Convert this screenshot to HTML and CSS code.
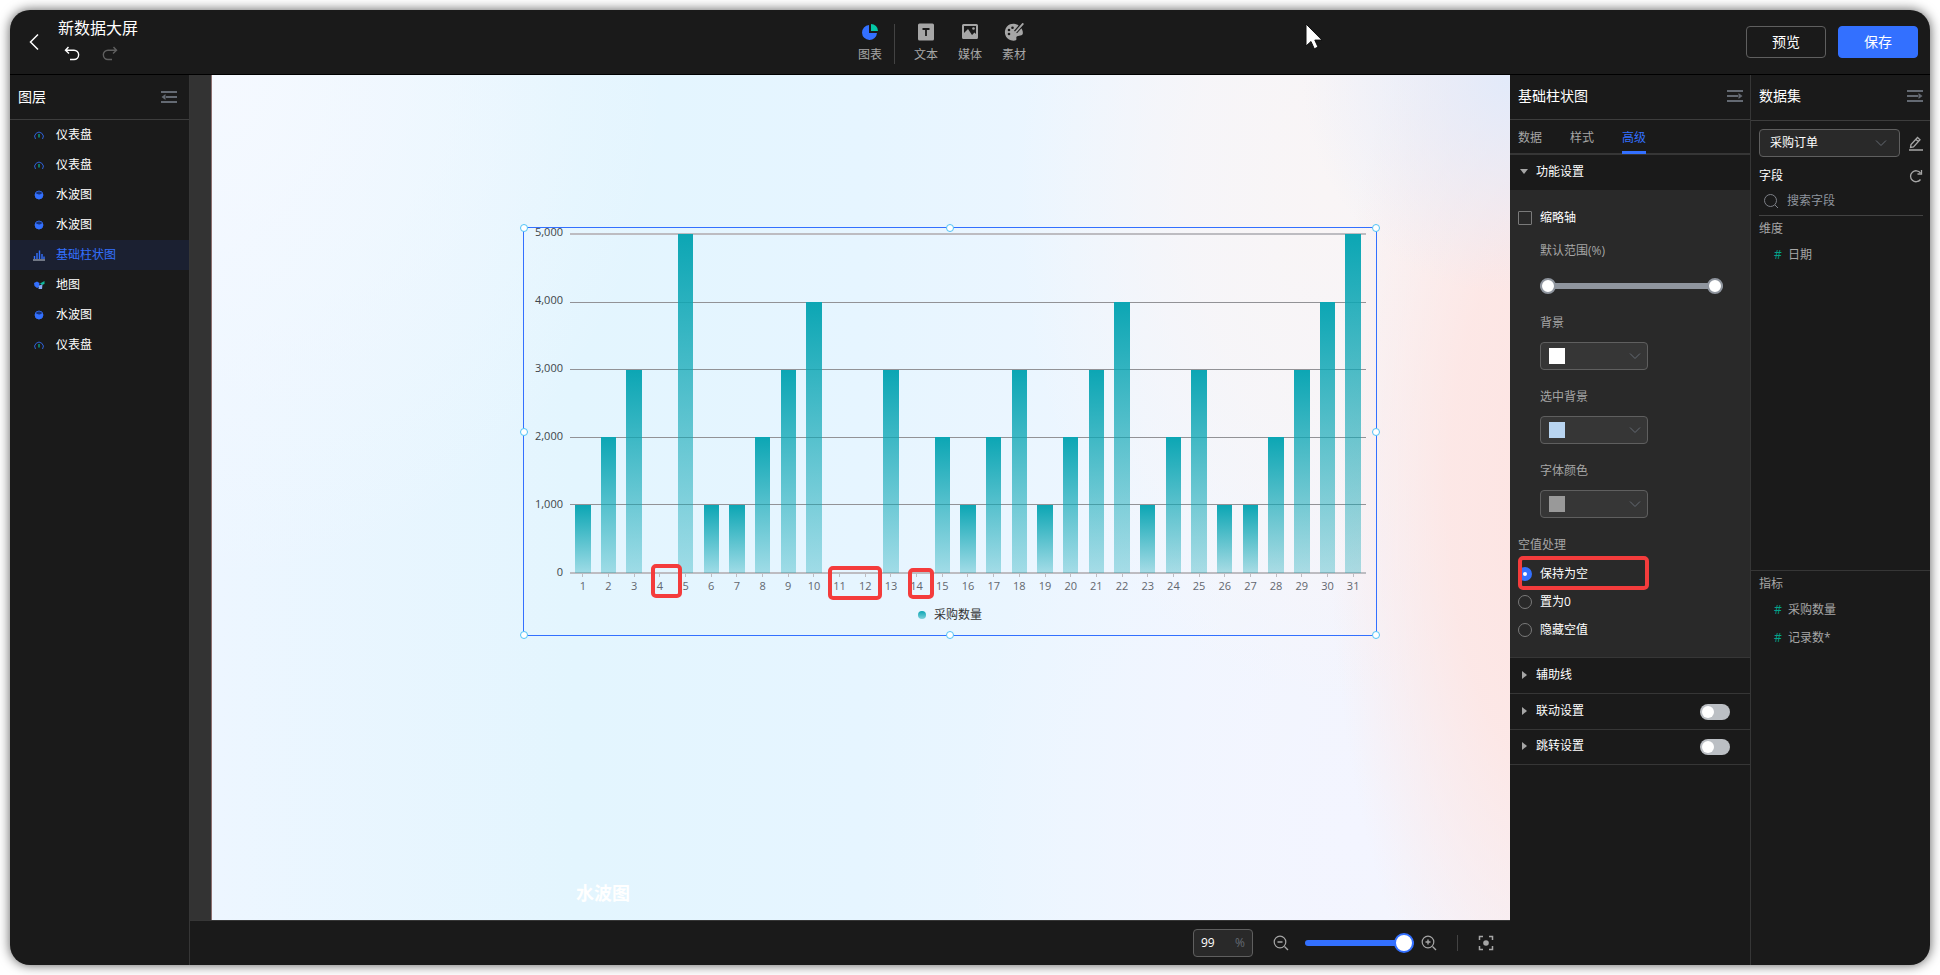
FILE: index.html
```html
<!DOCTYPE html>
<html lang="zh-CN">
<head>
<meta charset="utf-8">
<title>新数据大屏</title>
<link rel="stylesheet" href="styles.css">
</head>
<body>
<svg class="defs" aria-hidden="true">
  <defs>
    <symbol id="gauge" viewBox="0 0 12 12"><path d="M2.500 10A4.300 4.300 0 1 1 9.500 10" fill="none" stroke="#2f62d9"/><path d="M6 5v3.500" stroke="#0c8f7a" stroke-width="1.600"/></symbol>
    <symbol id="water" viewBox="0 0 12 12"><circle cx="6" cy="6" r="4" fill="#16337d" stroke="#2f62d9"/><path d="M2 4.500C3.500 3.500 4.500 6 6.500 5.500S9 4 10 5A4 4 0 0 1 2 7z" fill="#3370ff"/></symbol>
    <symbol id="chevron" viewBox="0 0 12 8"><path d="M1 1.500 6 6.500 11 1.500" fill="none" stroke="currentColor"/></symbol>
    <symbol id="fold" viewBox="0 0 16 14"><path d="M0 2h16M0 12h16M0 7h11" stroke="currentColor" stroke-width="2"/><path d="M11.500 4v6L15.500 7z" fill="currentColor"/></symbol>
  </defs>
</svg>
<div class="app">
  <header class="topbar">
    <div class="topbar-left">
      <button class="icon-btn" aria-label="返回"><svg width="12" height="18" viewBox="0 0 12 18"><path d="M10 1.500 2.500 9 10 16.500" fill="none" stroke="#fff" stroke-width="1.500"/></svg></button>
      <div class="doc">
        <h1>新数据大屏</h1>
        <div class="history">
          <button class="icon-btn" aria-label="撤销"><svg width="16" height="16" viewBox="0 0 16 16"><path d="M4.500 1 1.500 4.200 5 7.500M2 4.200h8a4.600 4.600 0 0 1 0 9.300H6" fill="none" stroke="#fff" stroke-width="1.400"/></svg></button>
          <button class="icon-btn" aria-label="重做"><svg width="16" height="16" viewBox="0 0 16 16"><path d="M11.500 1 14.500 4.200 11 7.500M14 4.200H6a4.600 4.600 0 0 0 0 9.300h4" fill="none" stroke="#5f5f5f" stroke-width="1.400"/></svg></button>
        </div>
      </div>
    </div>
    <nav class="tools">
      <button class="tool"><svg width="18" height="18" viewBox="0 0 18 18"><path d="M8 2a7.500 7.500 0 1 0 8 8H8z" fill="#3370ff"/><path d="M10 1a7 7 0 0 1 7 7h-7z" fill="#04c8a6"/></svg>图表</button>
      <span class="tools-sep"></span>
      <button class="tool"><svg width="18" height="18" viewBox="0 0 18 18"><rect x="1" y="0.500" width="16" height="17" rx="1.500" fill="#a6a6a6"/><path d="M5.500 6h7M9 6v7" stroke="#1a1a1a" stroke-width="1.800"/></svg>文本</button>
      <button class="tool"><svg width="18" height="18" viewBox="0 0 18 18"><path fill-rule="evenodd" d="M2.500 1h13A1.500 1.500 0 0 1 17 2.500v12a1.500 1.500 0 0 1-1.500 1.500h-13A1.500 1.500 0 0 1 1 14.500v-12A1.500 1.500 0 0 1 2.500 1zM3 3v7l4-4 4 6 2.500-2.500L15 11V3z" fill="#a6a6a6"/><circle cx="12.500" cy="5.500" r="1.300" fill="#a6a6a6"/></svg>媒体</button>
      <button class="tool"><svg width="20" height="18" viewBox="0 0 20 18"><path d="M14 2A8.500 8.500 0 1 0 11 17.500c2 0 1.300-2 1.300-3 0-2.500 5.700-1 6.400-3.500.5-2-.2-4-1.200-5.500" fill="#a6a6a6"/><path d="M19 .5 11.500 9" stroke="#1a1a1a" stroke-width="4"/><path d="M19.300.3 9 12l-.800 1.200" stroke="#a6a6a6" stroke-width="1.800"/><g fill="#1a1a1a"><circle cx="8.500" cy="4.700" r="1.300"/><circle cx="5" cy="7" r="1.300"/><circle cx="5" cy="11" r="1.300"/></g></svg>素材</button>
    </nav>
    <div class="topbar-actions">
      <button class="btn">预览</button>
      <button class="btn btn-primary">保存</button>
    </div>
    <svg class="pointer" width="20" height="28" viewBox="0 0 20 28" aria-hidden="true"><path d="M1 1v22l5-4.500 3.300 7.300 3.700-1.700-3.200-7H17z" fill="#fff" stroke="#111"/></svg>
  </header>

  <div class="workspace">
    <aside class="layers">
      <div class="panel-head"><h2>图层</h2><button class="icon-btn muted" aria-label="收起"><svg class="flip" width="16" height="14"><use href="#fold"/></svg></button></div>
      <ul class="layer-list">
        <li><svg class="li-icon"><use href="#gauge"/></svg>仪表盘</li>
        <li><svg class="li-icon"><use href="#gauge"/></svg>仪表盘</li>
        <li><svg class="li-icon"><use href="#water"/></svg>水波图</li>
        <li><svg class="li-icon"><use href="#water"/></svg>水波图</li>
        <li class="active"><svg class="li-icon" viewBox="0 0 12 12"><path d="M1.500 10V7M4 10V4M6.500 10V1.500M9 10V5M11 10V7.500" stroke="#3370ff" stroke-width="1.400"/><path d="M0 11h12" stroke="#c8cdd8"/></svg>基础柱状图</li>
        <li><svg class="li-icon" viewBox="0 0 12 12"><path d="M1 4l3-1.500L6.500 4 6 8 4 9 1.500 7z" fill="#3370ff"/><path d="M7 4.500 11.500 2v3L9 6z" fill="#0fb89c"/><path d="M6 6.500 9.500 5.500 9 10H5.500z" fill="#85a9f5"/></svg>地图</li>
        <li><svg class="li-icon"><use href="#water"/></svg>水波图</li>
        <li><svg class="li-icon"><use href="#gauge"/></svg>仪表盘</li>
      </ul>
    </aside>

    <main class="stage">
      <div class="canvas">
        <section class="chart">
          <div class="plot-row">
            <div class="y-axis"><span>5,000</span><span>4,000</span><span>3,000</span><span>2,000</span><span>1,000</span><span>0</span></div>
            <div class="plot">
              <div class="grid-lines"><i></i><i></i><i></i><i></i><i></i><i></i></div>
              <div class="bars">
                <b style="height:20%"></b><b style="height:40%"></b><b style="height:60%"></b><b style="height:0%"></b><b style="height:100%"></b><b style="height:20%"></b><b style="height:20%"></b><b style="height:40%"></b><b style="height:60%"></b><b style="height:80%"></b><b style="height:0%"></b><b style="height:0%"></b><b style="height:60%"></b><b style="height:0%"></b><b style="height:40%"></b><b style="height:20%"></b><b style="height:40%"></b><b style="height:60%"></b><b style="height:20%"></b><b style="height:40%"></b><b style="height:60%"></b><b style="height:80%"></b><b style="height:20%"></b><b style="height:40%"></b><b style="height:60%"></b><b style="height:20%"></b><b style="height:20%"></b><b style="height:40%"></b><b style="height:60%"></b><b style="height:80%"></b><b style="height:100%"></b>
              </div>
            </div>
          </div>
          <div class="x-axis"><span>1</span><span>2</span><span>3</span><span>4</span><span>5</span><span>6</span><span>7</span><span>8</span><span>9</span><span>10</span><span>11</span><span>12</span><span>13</span><span>14</span><span>15</span><span>16</span><span>17</span><span>18</span><span>19</span><span>20</span><span>21</span><span>22</span><span>23</span><span>24</span><span>25</span><span>26</span><span>27</span><span>28</span><span>29</span><span>30</span><span>31</span></div>
          <div class="legend"><i></i>采购数量</div>
          <i class="handle nw"></i><i class="handle n"></i><i class="handle ne"></i><i class="handle w"></i><i class="handle e"></i><i class="handle sw"></i><i class="handle s"></i><i class="handle se"></i>
          <i class="mark mark-4"></i><i class="mark mark-11"></i><i class="mark mark-14"></i>
        </section>
        <div class="water-title">水波图</div>
      </div>
      <footer class="zoombar">
        <label class="zoom-input"><input type="text" value="99" aria-label="缩放比例"><span>%</span></label>
        <button class="icon-btn zoom-out" aria-label="缩小"><svg width="16" height="16" viewBox="0 0 16 16"><path d="M4.500 7h5M11.500 11.500l3.500 3.500" stroke="#a6a6a6" stroke-width="1.400"/><circle cx="7" cy="7" r="5.800" fill="none" stroke="#a6a6a6" stroke-width="1.200"/></svg></button>
        <input class="zoom-range" type="range" min="0" max="100" value="100" aria-label="缩放">
        <button class="icon-btn zoom-in" aria-label="放大"><svg width="16" height="16" viewBox="0 0 16 16"><path d="M4.500 7h5M7 4.500v5M11.500 11.500l3.500 3.500" stroke="#a6a6a6" stroke-width="1.400"/><circle cx="7" cy="7" r="5.800" fill="none" stroke="#a6a6a6" stroke-width="1.200"/></svg></button>
        <span class="zoom-sep"></span>
        <button class="icon-btn" aria-label="适应画布"><svg width="16" height="16" viewBox="0 0 16 16"><path d="M1.500 5V1.500H5M11 1.500h3.500V5M14.500 11v3.500H11M5 14.500H1.500V11" fill="none" stroke="#a6a6a6" stroke-width="1.500"/><circle cx="8" cy="8" r="2.800" fill="#a6a6a6"/></svg></button>
      </footer>
    </main>

    <aside class="props">
      <div class="panel-head"><h2>基础柱状图</h2><button class="icon-btn muted" aria-label="收起"><svg width="16" height="14"><use href="#fold"/></svg></button></div>
      <nav class="tabs"><button>数据</button><button>样式</button><button class="active">高级</button></nav>
      <button class="section-head open"><i></i>功能设置</button>
      <div class="section-body">
        <label class="check"><input type="checkbox">缩略轴</label>
        <div class="indent">
          <p class="field-label">默认范围(%)</p>
          <div class="dual-range"><input type="range" value="0" aria-label="范围起点"><input type="range" value="100" aria-label="范围终点"></div>
          <label class="field-label" for="bg">背景</label>
          <div class="color-select"><select id="bg"><option></option></select><i class="swatch white"></i><svg width="12" height="8"><use href="#chevron"/></svg></div>
          <label class="field-label" for="sel-bg">选中背景</label>
          <div class="color-select"><select id="sel-bg"><option></option></select><i class="swatch blue"></i><svg width="12" height="8"><use href="#chevron"/></svg></div>
          <label class="field-label" for="font-color">字体颜色</label>
          <div class="color-select"><select id="font-color"><option></option></select><i class="swatch gray"></i><svg width="12" height="8"><use href="#chevron"/></svg></div>
        </div>
        <p class="field-label">空值处理</p>
        <div class="radios">
          <label class="check"><input type="radio" name="empty" checked>保持为空</label>
          <label class="check"><input type="radio" name="empty">置为0</label>
          <label class="check"><input type="radio" name="empty">隐藏空值</label>
          <i class="mark mark-radio"></i>
        </div>
      </div>
      <div class="section-row"><button class="section-head"><i></i>辅助线</button></div>
      <div class="section-row"><button class="section-head"><i></i>联动设置</button><input class="switch" type="checkbox" aria-label="联动设置"></div>
      <div class="section-row last"><button class="section-head"><i></i>跳转设置</button><input class="switch" type="checkbox" aria-label="跳转设置"></div>
    </aside>

    <aside class="dataset">
      <div class="panel-head"><h2>数据集</h2><button class="icon-btn muted" aria-label="收起"><svg width="16" height="14"><use href="#fold"/></svg></button></div>
      <section class="dims">
        <div class="source">
          <div class="source-select"><select aria-label="数据集"><option>采购订单</option></select><svg width="12" height="8"><use href="#chevron"/></svg></div>
          <button class="icon-btn" aria-label="编辑"><svg width="14" height="15" viewBox="0 0 14 15"><path d="M1.500 11.500 2 8.500 8.500 1.500 11 3.800 4.500 11zM7 3.500 9.300 5.500M0 14h14" fill="none" stroke="#a6a6a6" stroke-width="1.300"/></svg></button>
        </div>
        <div class="fields-head"><h3>字段</h3><button class="icon-btn" aria-label="刷新"><svg width="14" height="14" viewBox="0 0 14 14"><path d="M11.500 10.500A5.500 5.500 0 1 1 11.500 4" fill="none" stroke="#a6a6a6" stroke-width="1.300"/><path d="M12.500 1v4h-4" fill="none" stroke="#a6a6a6" stroke-width="1.300"/></svg></button></div>
        <label class="search"><svg width="16" height="16" viewBox="0 0 16 16"><circle cx="7.500" cy="7.500" r="6" fill="none" stroke="#7d8087"/><path d="M12 12l3 3" stroke="#7d8087"/></svg><input type="text" placeholder="搜索字段" aria-label="搜索字段"></label>
        <h4>维度</h4>
        <ul class="field-list"><li><i>#</i>日期</li></ul>
      </section>
      <section class="measures">
        <h4>指标</h4>
        <ul class="field-list"><li><i>#</i>采购数量</li><li><i>#</i>记录数*</li></ul>
      </section>
    </aside>
  </div>
</div>
</body>
</html>
```

FILE: styles.css
```css
* { box-sizing: border-box; margin: 0; padding: 0; }
body {
  background: #fff;
  color: #fff;
  font: 12px/20px "Open Sans", "Noto Sans CJK SC", sans-serif;
}
button, input, select { font: inherit; color: inherit; background: none; border: 0; outline: 0; }
h1, h2, h3, h4 { font-weight: 400; }
ul { list-style: none; }
i { font-style: normal; }
svg { display: block; flex: none; }
.defs { position: absolute; width: 0; height: 0; }

.app {
  display: flex;
  flex-direction: column;
  height: calc(100vh - 20px);
  min-height: 780px;
  margin: 10px;
  overflow: hidden;
  background: #1a1a1a;
  border-radius: 20px;
  box-shadow: 0 0 12px rgba(0, 0, 0, .65);
}
.icon-btn { display: flex; align-items: center; justify-content: center; }
.muted { color: #646a73; }
.flip { transform: scaleX(-1); }

/* Top bar */
.topbar {
  position: relative;
  display: grid;
  grid-template-columns: 1fr auto 1fr;
  align-items: center;
  height: 65px;
  flex: none;
  border-bottom: 1px solid #000;
}
.topbar-left { display: flex; align-items: center; gap: 18px; padding-left: 18px; }
.doc h1 { font-size: 16px; line-height: 20px; }
.history { display: flex; gap: 22px; padding: 8px 0 4px 6px; }
.tools { display: flex; align-items: center; gap: 20px; margin-right: 56px; padding-top: 4px; }
.tool { display: flex; flex-direction: column; align-items: center; gap: 4px; width: 24px; color: #a6a6a6; white-space: nowrap; }
.tools-sep { width: 1px; height: 40px; margin: 0 -1px 0 -8px; background: #434343; }
.topbar-actions { display: flex; justify-content: flex-end; gap: 12px; padding-right: 12px; }
.btn { width: 80px; height: 32px; border: 1px solid #5f5f5f; border-radius: 4px; font-size: 14px; }
.btn-primary { background: #3370ff; border-color: #3370ff; }
.pointer { position: absolute; left: 1295px; top: 13px; }

.workspace { display: flex; flex: 1; min-height: 0; }
.panel-head {
  display: flex;
  align-items: center;
  justify-content: space-between;
  height: 45px;
  padding: 0 7px 0 8px;
  border-bottom: 1px solid #3d3d3d;
}
.panel-head h2 { font-size: 14px; }
.props .panel-head, .dataset .panel-head { padding-bottom: 3px; }

/* Layers */
.layers { width: 180px; flex: none; border-right: 1px solid #363636; }
.layers .panel-head { padding-right: 12px; }
.layer-list li { display: flex; align-items: center; gap: 11px; height: 30px; padding-left: 23px; }
.layer-list .active { color: #3370ff; background: #1b2031; }
.li-icon { width: 12px; height: 12px; }

/* Stage */
.stage { display: flex; flex-direction: column; flex: 1; min-width: 0; background: #333; }
.canvas {
  position: relative;
  flex: 1;
  margin-left: 21px;
  border-left: 1px solid #8c6f6f;
  overflow: hidden;
  background:
    radial-gradient(ellipse 16% 26% at 100% 0, #e2eafa 0, rgba(226, 234, 250, 0) 100%),
    radial-gradient(ellipse 17% 72% at 103% 50%, #fde4e2 0, rgba(253, 230, 228, .9) 45%, rgba(253, 232, 230, 0) 100%),
    radial-gradient(ellipse 24% 60% at 86% 14%, #f9f5f6 0, rgba(249, 245, 246, .7) 45%, rgba(248, 245, 250, 0) 100%),
    radial-gradient(ellipse 30% 60% at 88% 90%, #f3f5ff 0, rgba(243, 245, 255, 0) 100%),
    radial-gradient(ellipse 35% 60% at 0 0, #f5f9ff 0, rgba(244, 248, 255, 0) 100%),
    linear-gradient(90deg, #edf6ff 0, #e3f5fe 28%, #e6f5ff 50%, #eff6ff 75%, #f6f3f8 100%);
}
.water-title {
  position: absolute;
  left: 364px;
  bottom: 14px;
  font-size: 18px;
  line-height: 26px;
  font-weight: 700;
}

/* Chart widget placed on the canvas */
.chart {
  position: absolute;
  left: 311px;
  top: 152px;
  width: 854px;
  height: 409px;
  border: 1px solid #3370ff;
  padding: 5px 10px 0 0;
  color: #40454a;
  font-size: 11px;
}
.plot-row { display: flex; height: 341px; }
.y-axis {
  display: flex;
  flex-direction: column;
  justify-content: space-between;
  align-items: flex-end;
  width: 39px;
  margin: -1px 7px 2px 0;
  line-height: 0;
}
.plot { position: relative; flex: 1; }
.grid-lines { display: flex; flex-direction: column; justify-content: space-between; height: 100%; }
.grid-lines i { height: 1px; background: #929296; }
.grid-lines i:first-child, .grid-lines i:last-child { height: 2px; background: #bdbcc1; }
.bars {
  position: absolute;
  inset: 1px 0;
  display: grid;
  grid-template-columns: repeat(31, 1fr);
  align-items: end;
  justify-items: center;
}
.bars b { width: 60%; background: linear-gradient(#0ca6b4, rgba(12, 166, 180, .32)); }
.x-axis { display: grid; grid-template-columns: repeat(31, 1fr); margin-left: 46px; color: #62666e; line-height: 18px; text-align: center; }
.x-axis span::before { content: ""; display: block; width: 1px; height: 3px; margin: 0 auto; background: #bdbcc1; }
.legend { display: flex; align-items: center; justify-content: center; gap: 8px; padding: 10px 0 0 10px; color: #333; font-size: 12px; }
.legend i { width: 8px; height: 8px; border-radius: 4px; background: linear-gradient(#0ca6b4, #7ed0da); }
.handle {
  position: absolute;
  width: 8px;
  height: 8px;
  margin: -4px;
  background: #fff;
  border: 1px solid #4fc3f7;
  border-radius: 50%;
}
.nw, .n, .ne { top: 0; }
.w, .e { top: 50%; }
.sw, .s, .se { top: 100%; }
.nw, .w, .sw { left: 0; }
.n, .s { left: 50%; }
.ne, .e, .se { left: 100%; }
.mark { position: absolute; border: 4px solid #f43c3c; border-radius: 5px; }
.mark-4 { left: 127px; top: 336px; width: 31px; height: 34px; }
.mark-11 { left: 304px; top: 338px; width: 54px; height: 34px; }
.mark-14 { left: 384px; top: 340px; width: 26px; height: 31px; }

/* Zoom bar */
.zoombar {
  display: flex;
  align-items: center;
  justify-content: flex-end;
  height: 45px;
  padding-right: 16px;
  background: #1a1a1a;
  border-top: 1px solid #363636;
}
.zoom-input { display: flex; width: 60px; height: 28px; padding: 0 7px; align-items: center; background: #292929; border: 1px solid #5f5f5f; border-radius: 4px; }
.zoom-input input { width: 34px; }
.zoom-input span { color: #646a73; }
.zoom-out { margin: 0 16px 0 20px; }
.zoom-range { appearance: none; width: 109px; height: 20px; }
.zoom-range::-webkit-slider-runnable-track { height: 6px; border-radius: 3px; background: #3370ff; }
.zoom-range::-webkit-slider-thumb { appearance: none; width: 20px; height: 20px; margin-top: -7px; background: #fff; border: 2px solid #3370ff; border-radius: 50%; }
.zoom-in { margin: 0 20px 0 7px; }
.zoom-sep { width: 1px; height: 16px; margin-right: 20px; background: #434343; }

/* Properties */
.props { width: 240px; flex: none; }
.tabs { display: flex; gap: 28px; height: 35px; padding: 0 8px; box-shadow: inset 0 -2px #363636; color: #a6a6a6; }
.tabs button { height: 34px; padding-top: 4px; border-bottom: 3px solid transparent; }
.tabs .active { color: #3370ff; border-color: #3370ff; }
.section-head { display: flex; align-items: center; gap: 8px; height: 35px; padding: 0 0 2px 12px; }
.section-head i { width: 6px; border: solid transparent; border-width: 4px 0 4px 5px; border-left-color: #a6a6a6; }
.section-head.open { padding-left: 10px; }
.section-head.open i { width: 8px; border-width: 5px 4px 0; border-color: #a6a6a6 transparent; }
.section-body { padding: 18px 8px 13px; background: #292929; }
.check { display: flex; align-items: center; gap: 8px; }
.check input { appearance: none; width: 14px; height: 14px; border: 1px solid #7a7a7a; border-radius: 1px; }
.check input[type="radio"] { border-radius: 50%; }
.check input[type="radio"]:checked { border: 5px solid #3370ff; background: #fff; }
.indent { padding: 13px 19px 17px 22px; }
.field-label { display: block; color: #a6a6a6; }
.dual-range { position: relative; height: 20px; margin: 15px 0 17px; }
.dual-range input { position: absolute; inset: 0; width: 100%; appearance: none; pointer-events: none; }
.dual-range ::-webkit-slider-runnable-track { height: 6px; border-radius: 3px; background: #8f959e; }
.dual-range input + input::-webkit-slider-runnable-track { background: none; }
.dual-range ::-webkit-slider-thumb { appearance: none; width: 16px; height: 16px; margin-top: -5px; background: #fff; border: 2px solid #8f959e; border-radius: 50%; pointer-events: auto; }
.color-select { position: relative; width: 108px; height: 28px; margin: 9px 0 17px; color: #646a73; }
.color-select:last-child { margin-bottom: 0; }
.color-select select, .source-select select { appearance: none; width: 100%; height: 28px; border: 1px solid #5f5f5f; border-radius: 4px; background: #363636; }
.color-select svg { position: absolute; right: 7px; top: 10px; pointer-events: none; }
.swatch { position: absolute; left: 9px; top: 6px; width: 16px; height: 16px; pointer-events: none; }
.white { background: #fff; }
.blue { background: #b8d4f0; }
.gray { background: #999; }
.radios { position: relative; padding-top: 5px; }
.radios .check { height: 28px; }
.mark-radio { left: 0; top: 1px; width: 131px; height: 34px; }
.section-row { display: flex; align-items: center; justify-content: space-between; padding-right: 20px; border-top: 1px solid #363636; }
.section-row.last { border-bottom: 1px solid #363636; }
.section-row.last .section-head { height: 34px; }
.switch { appearance: none; width: 30px; height: 16px; padding: 2px; border-radius: 8px; background: #bbbfc4; }
.switch::before { content: ""; display: block; width: 12px; height: 12px; border-radius: 50%; background: #fff; }

/* Dataset */
.dataset { display: flex; flex-direction: column; width: 180px; flex: none; border-left: 1px solid #363636; }
.dataset .panel-head { height: 46px; flex: none; }
.dims { flex: 53 1 0; padding: 8px 7px 0 8px; }
.measures { flex: 47 1 0; padding: 3px 7px 0 8px; border-top: 1px solid #363636; }
.source { display: flex; gap: 9px; }
.source-select { position: relative; flex: 1; color: #646a73; }
.source-select select { padding: 0 10px; background: #292929; color: #fff; }
.source-select svg { position: absolute; right: 13px; top: 10px; pointer-events: none; }
.fields-head { display: flex; justify-content: space-between; margin-top: 9px; }
.search { display: flex; align-items: center; gap: 8px; height: 30px; margin-bottom: 3px; padding-left: 4px; border-bottom: 1px solid #434343; }
.search input { flex: 1; min-width: 0; }
.search input::placeholder { color: #8f959e; }
h4 { font-size: 12px; color: #a6a6a6; }
h3 { font-size: 12px; }
.field-list { padding-top: 2px; }
.field-list li { display: flex; align-items: center; gap: 6px; height: 28px; padding-left: 15px; color: #a6a6a6; }
.field-list i { width: 8px; color: #04a38a; }
```
